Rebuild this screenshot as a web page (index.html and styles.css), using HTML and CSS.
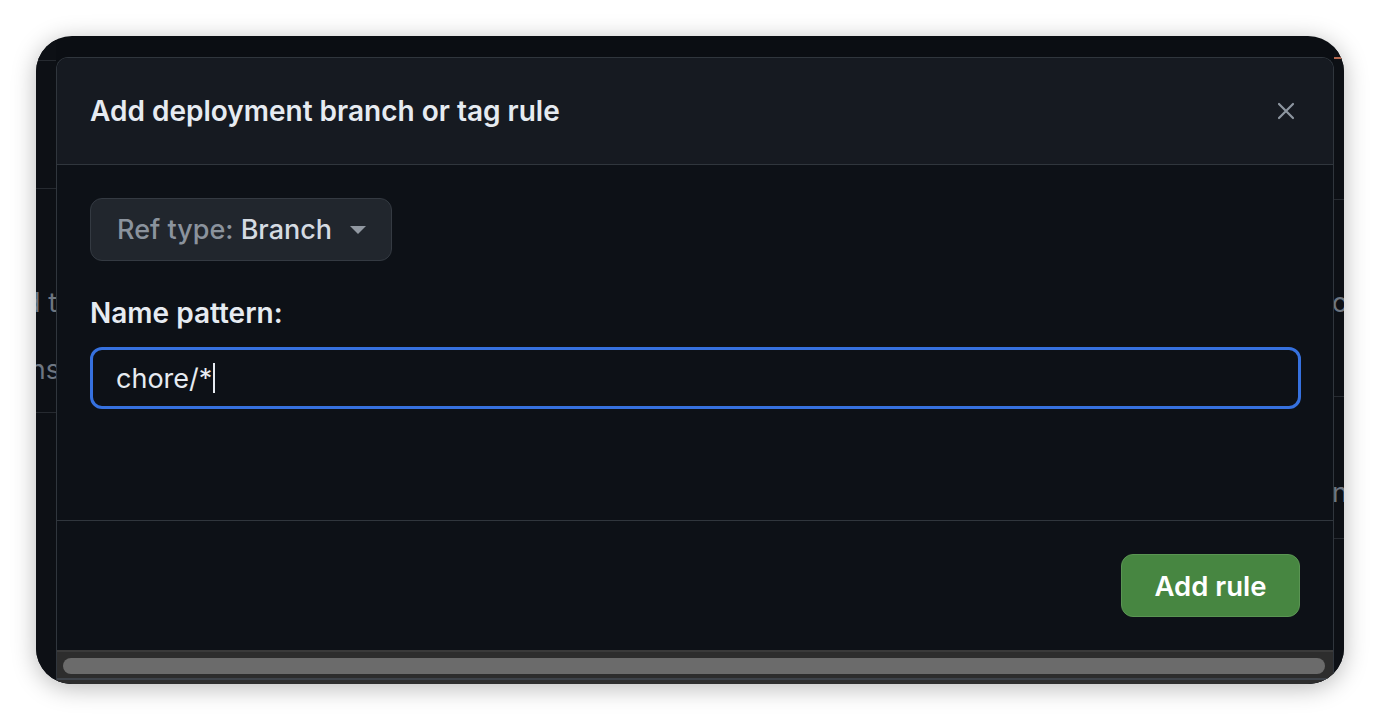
FILE: index.html
```html
<!DOCTYPE html>
<html lang="en">
<head>
<meta charset="utf-8">
<title>Add deployment branch or tag rule</title>
<link rel="stylesheet" href="styles.css">
</head>
<body>
<div class="window">
  <div class="page">
    <div class="page-left">
      <div class="pl-top"></div>
      <div class="pl-row1"></div>
      <div class="pl-row2">
        <span class="frag">d t</span>
        <span class="frag">ns</span>
      </div>
    </div>
    <div class="page-right">
      <div class="pr-top"></div>
      <div class="pr-row1"></div>
      <div class="pr-row2"><span class="frag">o</span></div>
      <div class="pr-row3"><span class="frag">n</span></div>
    </div>
  </div>

  <div class="modal">
    <div class="modal-header">
      <h1 class="modal-title">Add deployment branch or tag rule</h1>
      <button class="close-btn" aria-label="Close">
        <svg width="18" height="18" viewBox="0 0 18 18"><path d="M2 2 L16 16 M16 2 L2 16" stroke="#8d96a0" stroke-width="2.2" stroke-linecap="round" fill="none"/></svg>
      </button>
    </div>
    <div class="modal-body">
      <button class="ref-btn"><span class="ref-text"><span class="ref-label">Ref type: </span><span class="ref-value">Branch</span></span>
        <svg class="caret" width="16" height="8" viewBox="0 0 16 8"><path d="M0 0 L16 0 L8 8 Z" fill="#9198a1"/></svg>
      </button>
      <label class="field-label">Name pattern:</label>
      <div class="input"><span class="input-text">chore/*</span><span class="text-caret"></span></div>
    </div>
    <div class="modal-footer">
      <button class="primary-btn">Add rule</button>
    </div>
    <div class="scrollbar"><div class="thumb"></div></div>
  </div>
</div>
</body>
</html>
```
FILE: styles.css
```css
* { box-sizing: border-box; }
html, body { margin: 0; padding: 0; }
body {
  background: #ffffff;
  width: 1380px;
  height: 720px;
  padding: 36px;
  font-family: Inter, "Noto Sans", "Liberation Sans", sans-serif;
  overflow: hidden;
}
.window {
  position: relative;
  width: 1308px;
  height: 648px;
  border-radius: 36px;
  overflow: hidden;
  background: #0b0e13;
  box-shadow: 0 4px 24px rgba(0,0,0,0.28);
}
.page {
  display: flex;
  justify-content: space-between;
  height: 100%;
}
.frag {
  display: block;
  color: #6e7681;
  font-size: 27px;
  line-height: 30px;
  white-space: nowrap;
}
.page-left {
  width: 20px;
  overflow: hidden;
  display: flex;
  flex-direction: column;
  background: #0d1015;
}
.pl-top { height: 25px; border-bottom: 1px solid #262a30; }
.pl-row1 { height: 128px; border-bottom: 1px solid #262a30; }
.pl-row2 {
  height: 224px;
  border-bottom: 1px solid #262a30;
  padding-top: 99px;
  display: flex;
  flex-direction: column;
  align-items: flex-end;
  gap: 37px;
}
.pl-row2 .frag { margin-right: -1px; }
.pl-row2 .frag:last-child { margin-right: -4px; }
.page-right {
  width: 10px;
  overflow: hidden;
  display: flex;
  flex-direction: column;
  background: #0d1015;
}
.pr-top { border-top: 2px solid #b5674e; margin-top: 21px; height: 0; }
.pr-row1 { height: 141px; border-bottom: 1px solid #262a30; }
.pr-row2 { height: 197px; border-bottom: 1px solid #262a30; padding-top: 88px; }
.pr-row3 { height: 142px; border-bottom: 1px solid #262a30; padding-top: 81px; }
.page-right .frag { margin-left: -2px; }

.modal {
  position: absolute;
  left: 20px;
  top: 21px;
  width: 1278px;
  height: 627px;
  display: flex;
  flex-direction: column;
  border: 1px solid #30363d;
  border-bottom: none;
  border-radius: 12px 12px 0 0;
  background: #0d1117;
  overflow: hidden;
}
.modal-header {
  height: 107px;
  flex: none;
  background: #161a21;
  border-bottom: 1px solid #30363d;
  display: flex;
  align-items: center;
  justify-content: space-between;
  padding: 0 38px 0 33px;
}
.modal-title {
  margin: 0;
  font-size: 28px;
  font-weight: 600;
  color: #e6ebf1;
}
.close-btn {
  background: none;
  border: none;
  padding: 0;
  width: 18px;
  height: 18px;
  display: flex;
}
.modal-body {
  height: 355px;
  flex: none;
  padding: 33px 33px 0 33px;
  display: flex;
  flex-direction: column;
  align-items: flex-start;
}
.ref-btn {
  height: 63px;
  width: 302px;
  display: flex;
  align-items: center;
  padding: 0 25px 0 26px;
  background: #21262d;
  border: 1px solid #343a42;
  border-radius: 12px;
  font-family: inherit;
  font-size: 27px;
  font-weight: 500;
}
.ref-text { white-space: pre; }
.ref-label { color: #8b939d; }
.ref-value { color: #d5dbe2; }
.caret { margin-left: auto; }
.field-label {
  margin-top: 37px;
  font-size: 28px;
  font-weight: 600;
  color: #e6ebf1;
  line-height: 30px;
}
.input {
  margin-top: 19px;
  width: 1211px;
  height: 62px;
  border: 3px solid #3671df;
  border-radius: 12px;
  display: flex;
  align-items: center;
  padding-left: 23px;
  background: #0d1117;
}
.input-text {
  font-size: 27px;
  color: #e6ebf1;
}
.text-caret {
  width: 2px;
  height: 30px;
  background: #e6ebf1;
  margin-left: 1px;
}
.modal-footer {
  height: 130px;
  flex: none;
  border-top: 1px solid #30363d;
  display: flex;
  justify-content: flex-end;
  align-items: flex-start;
  padding: 33px 33px 0 0;
}
.primary-btn {
  width: 179px;
  height: 63px;
  background: #478641;
  border: 1px solid #5a9553;
  border-radius: 12px;
  color: #ffffff;
  font-family: inherit;
  font-size: 27.5px;
  font-weight: 600;
}
.scrollbar {
  flex: none;
  height: 34px;
  background: #2d2d2d;
  border-top: 2px solid #3a3a3a;
  padding: 6px 8px 0 6px;
  position: relative;
}
.scrollbar::after {
  content: "";
  position: absolute;
  left: 0; right: 0;
  bottom: 4px;
  height: 2px;
  background: #3e434a;
}
.thumb {
  height: 16px;
  border-radius: 8px;
  background: #6b6b6b;
}
```
